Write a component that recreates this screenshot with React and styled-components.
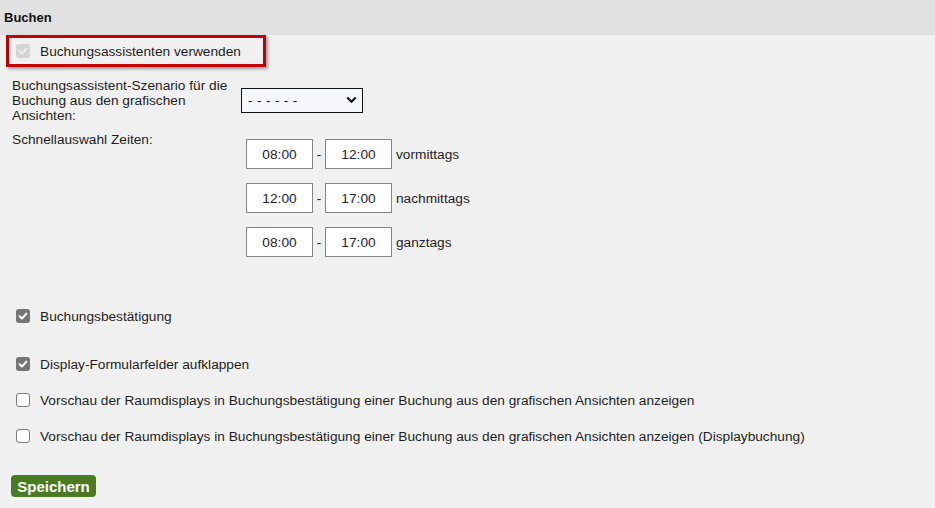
import React from "react";
import styled, { createGlobalStyle } from "styled-components";

const Global = createGlobalStyle`
  html, body { margin: 0; padding: 0; background: #f0f0f0; }
  body { font-family: "Liberation Sans", Arial, sans-serif; font-size: 13.7px; color: #1e1e1e; }
  * { box-sizing: border-box; }
`;

const Page = styled.div`
  width: 935px;
  height: 508px;
  background: #f0f0f0;
  display: flex;
  flex-direction: column;
`;

const Header = styled.div`
  height: 35px;
  background: #e1e1e1;
  display: flex;
  align-items: center;
  padding-left: 4px;
  font-weight: bold;
  font-size: 13px;
  color: #111;
`;

const Content = styled.div`
  display: flex;
  flex-direction: column;
`;

const HighlightBox = styled.div`
  margin-left: 6px;
  width: 260px;
  height: 32px;
  border: 3px solid #c00000;
  box-shadow: 2px 2px 3px rgba(0, 0, 0, 0.35);
  display: flex;
  align-items: center;
  padding-left: 7px;
`;

const CheckRow = styled.label`
  display: flex;
  align-items: center;
  height: 20px;
  margin-top: ${(p) => p.$mt || 0}px;
  padding-left: ${(p) => (p.$inset ? 0 : 16)}px;
  gap: 10px;
  white-space: nowrap;
`;

const Box = styled.span`
  width: 14px;
  height: 14px;
  border-radius: 3px;
  flex: none;
  display: flex;
  align-items: center;
  justify-content: center;
  background: ${(p) => (p.$disabled ? "#d4d4d4" : p.$checked ? "#767676" : "#fff")};
  border: ${(p) => (p.$checked ? "none" : "1.5px solid #7a7a7a")};
`;

const Check = ({ checked, disabled }) => (
  <Box $checked={checked} $disabled={disabled}>
    {checked && (
      <svg width="10" height="10" viewBox="0 0 10 10">
        <path
          d="M1.6 5.2 L4 7.5 L8.4 2.6"
          fill="none"
          stroke={disabled ? "#ececec" : "#fff"}
          strokeWidth="1.9"
          strokeLinecap="round"
          strokeLinejoin="round"
        />
      </svg>
    )}
  </Box>
);

const Row = styled.div`
  display: flex;
  align-items: ${(p) => p.$align || "center"};
  padding-left: 12px;
  margin-top: ${(p) => p.$mt || 0}px;
`;

const RowLabel = styled.div`
  width: 229px;
  flex: none;
  line-height: 15px;
`;

const SelectWrap = styled.div`
  position: relative;
  width: 122px;
  height: 25px;
`;

const Select = styled.select`
  appearance: none;
  width: 100%;
  height: 100%;
  border: 1px solid #111;
  border-radius: 0;
  background: #f6f7fb;
  font-family: "Liberation Sans", Arial, sans-serif;
  font-size: 13.7px;
  color: #111;
  padding-left: 6px;
  letter-spacing: 0.3px;
`;

const Chevron = styled.svg`
  position: absolute;
  right: 6px;
  top: 8px;
  pointer-events: none;
`;

const Times = styled.div`
  display: flex;
  flex-direction: column;
  gap: 14px;
  padding-top: 7px;
  margin-left: 5px;
`;

const TimeLine = styled.div`
  display: flex;
  align-items: center;
`;

const TimeInput = styled.input`
  width: 67px;
  height: 30px;
  border: 1px solid #858585;
  background: #fff;
  text-align: center;
  font-family: "Liberation Sans", Arial, sans-serif;
  font-size: 13.7px;
  color: #1c2233;
  padding: 0;
  outline: none;
`;

const Dash = styled.span`
  width: 12px;
  text-align: center;
`;

const TimeLabel = styled.span`
  margin-left: 4px;
`;

const SaveButton = styled.button`
  margin-top: 29px;
  margin-left: 11px;
  width: 85px;
  height: 22px;
  border: none;
  border-radius: 4px;
  background: #4a7b22;
  color: #fff;
  font-family: "Liberation Sans", Arial, sans-serif;
  font-weight: bold;
  font-size: 15px;
  padding: 0;
  align-self: flex-start;
`;

const times = [
  ["08:00", "12:00", "vormittags"],
  ["12:00", "17:00", "nachmittags"],
  ["08:00", "17:00", "ganztags"],
];

export default function App() {
  return (
    <Page>
      <Global />
      <Header>Buchen</Header>
      <Content>
        <HighlightBox>
          <CheckRow $inset>
            <Check checked disabled />
            Buchungsassistenten verwenden
          </CheckRow>
        </HighlightBox>
        <Row $mt={11}>
          <RowLabel>Buchungsassistent-Szenario für die Buchung aus den grafischen Ansichten:</RowLabel>
          <SelectWrap>
            <Select defaultValue="none">
              <option value="none">- - - - - -</option>
            </Select>
            <Chevron width="11" height="8" viewBox="0 0 11 8">
              <path d="M1.3 1.5 L5.5 5.8 L9.7 1.5" fill="none" stroke="#111" strokeWidth="2" />
            </Chevron>
          </SelectWrap>
        </Row>
        <Row $mt={9} $align="flex-start">
          <RowLabel>Schnellauswahl Zeiten:</RowLabel>
          <Times>
            {times.map(([a, b, l], i) => (
              <TimeLine key={i}>
                <TimeInput readOnly value={a} />
                <Dash>-</Dash>
                <TimeInput readOnly value={b} />
                <TimeLabel>{l}</TimeLabel>
              </TimeLine>
            ))}
          </Times>
        </Row>
        <CheckRow $mt={49}>
          <Check checked />
          Buchungsbestätigung
        </CheckRow>
        <CheckRow $mt={28}>
          <Check checked />
          Display-Formularfelder aufklappen
        </CheckRow>
        <CheckRow $mt={16}>
          <Check />
          Vorschau der Raumdisplays in Buchungsbestätigung einer Buchung aus den grafischen Ansichten anzeigen
        </CheckRow>
        <CheckRow $mt={16}>
          <Check />
          Vorschau der Raumdisplays in Buchungsbestätigung einer Buchung aus den grafischen Ansichten anzeigen (Displaybuchung)
        </CheckRow>
        <SaveButton>Speichern</SaveButton>
      </Content>
    </Page>
  );
}
